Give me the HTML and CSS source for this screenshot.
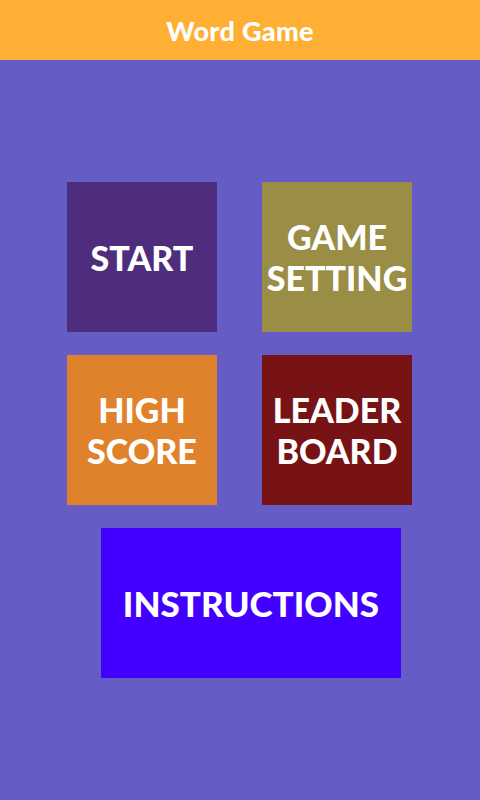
FILE: index.html
```html
<!DOCTYPE html>
<html>
<head>
<meta charset="utf-8">
<link rel="stylesheet" href="styles.css">
</head>
<body>
<header class="bar"><span class="title">Word Game</span></header>
<main class="menu">
  <div class="grid">
    <div class="tile start">START</div>
    <div class="tile setting">GAME<br>SETTING</div>
    <div class="tile score">HIGH<br>SCORE</div>
    <div class="tile leader">LEADER<br>BOARD</div>
  </div>
  <div class="tile wide">INSTRUCTIONS</div>
</main>
</body>
</html>
```
FILE: styles.css
```css
html, body { margin: 0; padding: 0; }
body {
  width: 480px;
  height: 800px;
  background: #655cc5;
  font-family: Lato, "Liberation Sans", sans-serif;
  overflow: hidden;
}
.bar {
  height: 60px;
  background: #ffaf33;
  display: flex;
  align-items: center;
  justify-content: center;
}
.title {
  color: #fff;
  font-weight: 900;
  font-size: 27px;
  letter-spacing: 0.3px;
}
.menu {
  padding-top: 122px;
  display: flex;
  flex-direction: column;
  gap: 23px;
}
.grid {
  display: grid;
  grid-template-columns: 150px 150px;
  grid-auto-rows: 150px;
  column-gap: 45px;
  row-gap: 23px;
  margin-left: 67px;
}
.tile {
  display: flex;
  align-items: center;
  justify-content: center;
  text-align: center;
  color: #fff;
  font-weight: 900;
  font-size: 34px;
  line-height: 41px;
}
.start { background: #4e2c7e; }
.setting { background: #9a8d45; }
.score { background: #e0822c; }
.leader { background: #771215; }
.wide {
  width: 300px;
  height: 150px;
  margin-left: 101px;
  background: #4200ff;
  font-size: 35px;
}
```
